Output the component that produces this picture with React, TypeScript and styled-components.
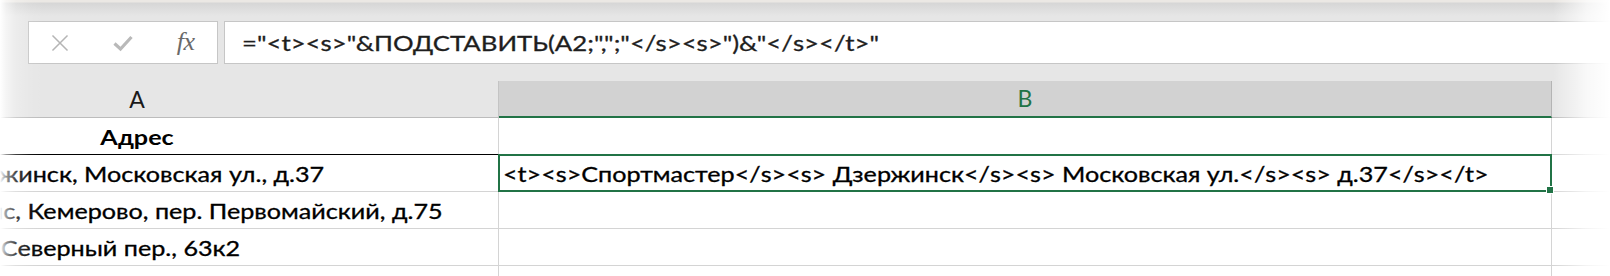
import React from "react";
import styled, { createGlobalStyle } from "styled-components";

const STRETCH = 1.227;
const GREEN = "#217346";

const Global = createGlobalStyle`
  html, body { margin: 0; padding: 0; background: #ffffff; }
  body { overflow: hidden; font-family: "Lato", "Noto Sans", sans-serif; }
`;

const Screen = styled.div`
  position: relative;
  width: 1610px;
  height: 276px;
  overflow: hidden;
  background: #ffffff;
`;

const FormulaBar = styled.div`
  display: flex;
  gap: 6px;
  padding: 21px 0 17px 28px;
  background: #e6e6e6;
`;

const CommandBox = styled.div`
  box-sizing: border-box;
  width: 190px;
  height: 43px;
  display: flex;
  background: #ffffff;
  border: 1px solid #c6c6c6;
`;

const IconSlot = styled.div`
  flex: 1;
  display: flex;
  align-items: center;
  justify-content: center;
`;

const FxLabel = styled.span`
  font-family: "Liberation Serif", "DejaVu Serif", serif;
  font-style: italic;
  font-size: 26px;
  line-height: 1;
  color: #6a6a6a;
  letter-spacing: -0.5px;
  margin-top: -1px;
`;

const FormulaInput = styled.div`
  box-sizing: border-box;
  flex: 1;
  height: 43px;
  background: #ffffff;
  border: 1px solid #c6c6c6;
  border-right: none;
  padding-left: 17px;
  display: flex;
  align-items: center;
`;

const Stretched = styled.span<{ $origin?: string }>`
  display: inline-block;
  white-space: pre;
  transform: scaleX(${STRETCH});
  transform-origin: ${(p) => p.$origin ?? "left"} center;
`;

const FormulaText = styled(Stretched)`
  font-size: 21px;
  line-height: 41px;
  color: #1e1e1e;
  -webkit-text-stroke: 0.3px #1e1e1e;
`;

const SheetViewport = styled.div`
  overflow: hidden;
  background: #ffffff;
`;

const Grid = styled.div`
  display: grid;
  grid-template-columns: 723px 1053px 320px;
  grid-auto-rows: 37px;
  margin-left: -224px;
`;

const HeaderCell = styled.div<{ $selected?: boolean }>`
  box-sizing: border-box;
  display: flex;
  align-items: center;
  justify-content: center;
  background: ${(p) => (p.$selected ? "#d2d2d2" : "#e6e6e6")};
  border-right: 1px solid ${(p) => (p.$selected ? "#b4b4b4" : "#c4c4c4")};
  border-bottom: ${(p) => (p.$selected ? `2px solid ${GREEN}` : "1px solid #bcbcbc")};
  color: ${(p) => (p.$selected ? GREEN : "#1a1a1a")};
  font-size: 23px;
  line-height: 1;
`;

const Cell = styled.div<{ $align?: "left" | "center"; $rule?: string; $active?: boolean }>`
  box-sizing: border-box;
  position: relative;
  display: flex;
  align-items: flex-end;
  justify-content: ${(p) => (p.$align === "center" ? "center" : "flex-start")};
  padding: 0 0 7px ${(p) => (p.$align === "center" ? "0" : "4px")};
  border-right: 1px solid #d4d4d4;
  border-bottom: 1px solid ${(p) => p.$rule ?? "#d4d4d4"};
  color: #000000;
  font-size: 20.5px;
  line-height: 20.5px;
  z-index: ${(p) => (p.$active ? 2 : 1)};
  ${(p) =>
    p.$active &&
    `
    &::after {
      content: "";
      position: absolute;
      left: -1px;
      top: -1px;
      right: -1px;
      bottom: -1px;
      border: 2px solid ${GREEN};
      pointer-events: none;
    }
  `}
`;

const CellText = styled(Stretched)<{ $bold?: boolean }>`
  font-weight: ${(p) => (p.$bold ? 700 : 400)};
  -webkit-text-stroke: ${(p) => (p.$bold ? "0" : "0.3px #000")};
`;

/* The part of a long address that is scrolled out of view on the left. */
const Lead = styled.span<{ $w: number }>`
  display: inline-flex;
  justify-content: flex-end;
  vertical-align: top;
  width: ${(p) => p.$w}px;
  overflow: hidden;
  white-space: pre;
`;

const FillHandle = styled.span`
  position: absolute;
  right: -3px;
  bottom: -3px;
  width: 6px;
  height: 6px;
  background: ${GREEN};
  border: 1px solid #ffffff;
  z-index: 3;
`;

const FadeLeft = styled.div`
  position: absolute;
  left: 0;
  top: 0;
  bottom: 0;
  width: 44px;
  background: linear-gradient(
    to right,
    #ffffff 0px,
    rgba(255, 255, 255, 0.6) 6px,
    rgba(255, 255, 255, 0.25) 16px,
    rgba(255, 255, 255, 0.08) 30px,
    rgba(255, 255, 255, 0) 44px
  );
  pointer-events: none;
  z-index: 10;
`;

const FadeRight = styled.div`
  position: absolute;
  left: 1553px;
  right: 0;
  top: 0;
  bottom: 0;
  background: linear-gradient(to right, rgba(255, 255, 255, 0) 0%, rgba(255, 255, 255, 0.75) 60%, #ffffff 100%);
  pointer-events: none;
  z-index: 10;
`;

const FadeTop = styled.div`
  position: absolute;
  left: 0;
  right: 0;
  top: 0;
  height: 16px;
  background: linear-gradient(
    to bottom,
    #ebe8e4 0px,
    #ebe8e4 2px,
    #d6d6d6 3px,
    rgba(230, 230, 230, 0) 16px
  );
  pointer-events: none;
  z-index: 9;
`;

const CancelIcon = () => (
  <svg width="18" height="18" viewBox="0 0 18 18" fill="none">
    <path d="M2 2 L16 16 M16 2 L2 16" stroke="#b5b5b5" strokeWidth="1.5" strokeLinecap="square" />
  </svg>
);

const EnterIcon = () => (
  <svg width="22" height="18" viewBox="0 0 22 18" fill="none">
    <path d="M2.5 9.5 L8.5 15 L19.5 3" stroke="#b9b9b9" strokeWidth="3.2" strokeLinejoin="miter" />
  </svg>
);

const FORMULA = '="<t><s>"&ПОДСТАВИТЬ(A2;",";"</s><s>")&"</s></t>"';

type Row = {
  lead?: string;
  leadW?: number;
  a: string;
  b?: string;
  bold?: boolean;
  center?: boolean;
  rule?: string;
  active?: boolean;
};

const rows: Row[] = [
  { a: "Адрес", bold: true, center: true, rule: "#000000" },
  {
    lead: "Спортмастер, Дзер",
    leadW: 178,
    a: "жинск, Московская ул., д.37",
    b: "<t><s>Спортмастер</s><s> Дзержинск</s><s> Московская ул.</s><s> д.37</s></t>",
    active: true,
  },
  { lead: "Спортмастер Мегаполи", leadW: 182, a: "с, Кемерово, пер. Первомайский, д.75" },
  { lead: "Спортмастер, Кемерово, ", leadW: 180, a: "Северный пер., 63к2" },
  { lead: "Спортмастер, Кемерово, ", leadW: 180, a: "Гвардейский пр., 4" },
];

export default function App() {
  return (
    <>
      <Global />
      <Screen>
        <FormulaBar>
          <CommandBox>
            <IconSlot>
              <CancelIcon />
            </IconSlot>
            <IconSlot>
              <EnterIcon />
            </IconSlot>
            <IconSlot>
              <FxLabel>fx</FxLabel>
            </IconSlot>
          </CommandBox>
          <FormulaInput>
            <FormulaText>{FORMULA}</FormulaText>
          </FormulaInput>
        </FormulaBar>
        <SheetViewport>
          <Grid>
            <HeaderCell>A</HeaderCell>
            <HeaderCell $selected>B</HeaderCell>
            <HeaderCell />
            {rows.map((r, i) => (
              <React.Fragment key={i}>
                <Cell $align={r.center ? "center" : "left"} $rule={r.rule}>
                  <CellText $bold={r.bold} $origin={r.center ? "center" : "left"}>
                    {r.lead && <Lead $w={r.leadW ?? 0}>{r.lead}</Lead>}
                    {r.a}
                  </CellText>
                </Cell>
                <Cell $active={r.active}>
                  {r.b && <CellText>{r.b}</CellText>}
                  {r.active && <FillHandle />}
                </Cell>
                <Cell />
              </React.Fragment>
            ))}
          </Grid>
        </SheetViewport>
        <FadeTop />
        <FadeLeft />
        <FadeRight />
      </Screen>
    </>
  );
}
